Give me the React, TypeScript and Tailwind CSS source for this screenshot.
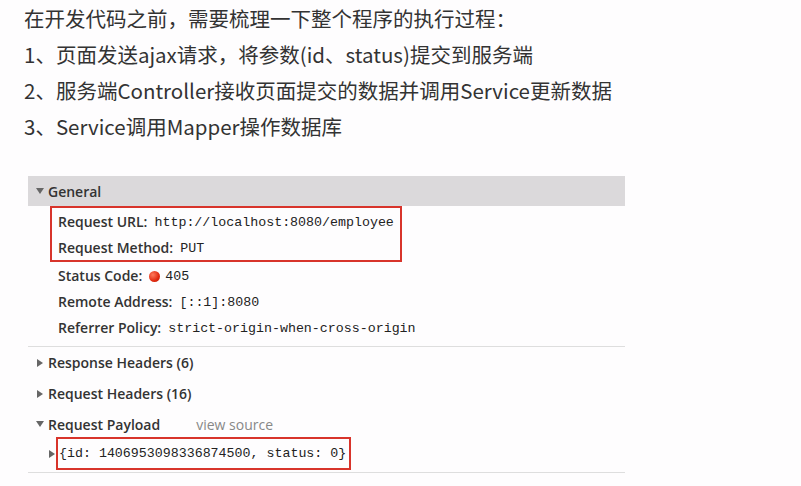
import { ReactNode } from "react";

const cjk = "font-['Noto_Sans_CJK_SC',sans-serif]";
const ui = "font-['Open_Sans','Noto_Sans',sans-serif]";
const mono = "font-['Liberation_Mono',monospace]";

function Caret({ open }: { open: boolean }) {
  return (
    <span className="inline-flex w-[12px] justify-center text-[#555]">
      {open ? (
        <svg width="8" height="6" viewBox="0 0 8 6">
          <path d="M0 0h8L4 6z" fill="#666" />
        </svg>
      ) : (
        <svg width="6" height="8" viewBox="0 0 6 8">
          <path d="M0 0v8l6-4z" fill="#666" />
        </svg>
      )}
    </span>
  );
}

function Row({ label, children }: { label: string; children: ReactNode }) {
  return (
    <div className="flex h-[26px] items-center">
      <span className="font-semibold text-[14px] text-[#333]">{label}</span>
      <span className={`${mono} ml-[7px] mt-[3px] text-[13.3px] text-[#222] flex items-center`}>
        {children}
      </span>
    </div>
  );
}

function Section({ open, title }: { open: boolean; title: string }) {
  return (
    <div className="flex h-[31px] items-center pl-[6px] gap-[2px]">
      <Caret open={open} />
      <span className="font-semibold text-[14px] text-[#333]">{title}</span>
    </div>
  );
}

export default function App() {
  return (
    <div className="w-[801px] h-[486px] bg-[#fefdfe] overflow-hidden">
      {/* Notes */}
      <div className={`${cjk} pl-[24px] text-[20.5px] text-[#333] leading-[36px]`}>
        <p>在开发代码之前，需要梳理一下整个程序的执行过程：</p>
        <p>1、页面发送ajax请求，将参数(id、status)提交到服务端</p>
        <p>2、服务端Controller接收页面提交的数据并调用Service更新数据</p>
        <p>3、Service调用Mapper操作数据库</p>
      </div>

      {/* DevTools headers panel */}
      <div className={`${ui} ml-[28px] mt-[32px] w-[597px]`}>
        <div className="flex h-[30px] items-center bg-[#dbd9db] pl-[6px] gap-[2px]">
          <Caret open />
          <span className="font-semibold text-[14px] text-[#333]">General</span>
        </div>

        <div className="pl-[30px] pb-[6px]">
          <div className="-ml-[8px] w-[352px] border-2 border-[#d8342b] pl-[6px]">
            <Row label="Request URL:">http://localhost:8080/employee</Row>
            <Row label="Request Method:">PUT</Row>
          </div>
          <Row label="Status Code:">
            <span className="mr-[5px] inline-block w-[11px] h-[11px] rounded-full bg-[radial-gradient(circle_at_35%_35%,#ff7a5c,#e02a10_60%,#b81c08)]" />
            405
          </Row>
          <Row label="Remote Address:">[::1]:8080</Row>
          <Row label="Referrer Policy:">strict-origin-when-cross-origin</Row>
        </div>

        <div className="border-t border-[#dedede]">
          <Section open={false} title="Response Headers (6)" />
          <Section open={false} title="Request Headers (16)" />
          <div className="flex h-[30px] items-center pl-[6px] gap-[2px]">
            <Caret open />
            <span className="font-semibold text-[14px] text-[#333]">Request Payload</span>
            <span className="ml-[34px] text-[14px] text-[#888]">view source</span>
          </div>
          <div className="-mt-[2px] flex items-center pl-[18px] pb-[2px]">
            <Caret open={false} />
            <div className={`${mono} -ml-[2px] w-[295px] h-[33px] flex items-center border-2 border-[#d8342b] pl-[1px] text-[13.3px] text-[#222]`}>
              {"{id: 1406953098336874500, status: 0}"}
            </div>
          </div>
        </div>
        <div className="border-t border-[#dedede]" />
      </div>
    </div>
  );
}
